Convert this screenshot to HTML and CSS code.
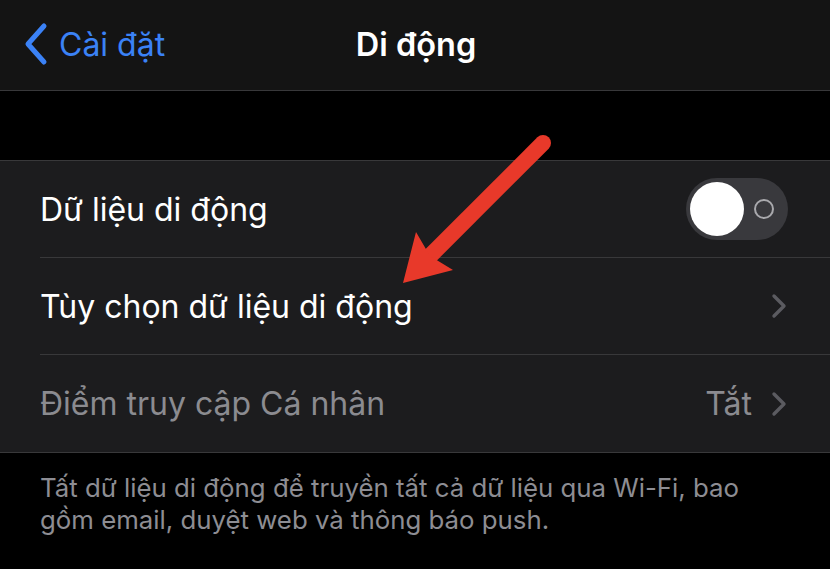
FILE: index.html
```html
<!DOCTYPE html>
<html lang="vi">
<head>
<meta charset="utf-8">
<title>Di động</title>
<link rel="stylesheet" href="styles.css">
</head>
<body>
<div class="screen">
  <header class="nav">
    <a class="back">
      <svg class="back-chev" width="26" height="44" viewBox="0 0 26 44"><path d="M21 4 L5 22 L21 40" fill="none" stroke="#3b82f6" stroke-width="5" stroke-linecap="round" stroke-linejoin="round"/></svg>
      <span class="back-label">Cài đặt</span>
    </a>
    <h1 class="title">Di động</h1>
    <span class="nav-right"></span>
  </header>
  <div class="gap"></div>
  <section class="group">
    <div class="row">
      <div class="row-inner">
        <span class="label">Dữ liệu di động</span>
        <span class="toggle"><span class="knob"></span><span class="ring"></span></span>
      </div>
    </div>
    <div class="row">
      <div class="row-inner">
        <span class="label">Tùy chọn dữ liệu di động</span>
        <svg class="chev" width="16" height="26" viewBox="0 0 16 26"><path d="M3 3 L13 13 L3 23" fill="none" stroke="#5b5b60" stroke-width="3.4" stroke-linecap="round" stroke-linejoin="round"/></svg>
      </div>
    </div>
    <div class="row">
      <div class="row-inner last">
        <span class="label dim">Điểm truy cập Cá nhân</span>
        <span class="value">Tắt</span>
        <svg class="chev" width="16" height="26" viewBox="0 0 16 26"><path d="M3 3 L13 13 L3 23" fill="none" stroke="#5b5b60" stroke-width="3.4" stroke-linecap="round" stroke-linejoin="round"/></svg>
      </div>
    </div>
  </section>
  <p class="footer">Tất dữ liệu di động để truyền tất cả dữ liệu qua Wi-Fi, bao gồm email, duyệt web và thông báo push.</p>
  <svg class="arrow" width="830" height="569" viewBox="0 0 830 569">
    <line x1="543" y1="143" x2="428" y2="258" stroke="#e8392a" stroke-width="16" stroke-linecap="round"/>
    <polygon points="403,283 416,232 430,256 453,270" fill="#e8392a"/>
  </svg>
</div>
</body>
</html>
```

FILE: styles.css
```css
* { box-sizing: border-box; }
html, body {
  margin: 0;
  padding: 0;
  background: #000;
}
body {
  font-family: Inter, "Noto Sans", "DejaVu Sans", sans-serif;
  color: #fff;
}
.screen {
  position: relative;
  width: 830px;
  height: 569px;
  overflow: hidden;
  background: #000;
}
.nav {
  height: 91px;
  background: #141414;
  border-bottom: 1px solid #38383a;
  display: grid;
  grid-template-columns: 1fr auto 1fr;
  align-items: center;
}
.back {
  display: flex;
  align-items: center;
  gap: 10px;
  padding-left: 23px;
  color: #3b82f6;
  font-size: 32px;
}
.back-chev { display: block; margin-top: -2px; }
.back-label { line-height: 1; }
.title {
  margin: 0;
  font-size: 32.5px;
  font-weight: 600;
  line-height: 1;
  padding-left: 2px;
}
.gap { height: 69px; }
.group {
  background: #1c1c1e;
  border-top: 1px solid #38383a;
  border-bottom: 1px solid #38383a;
}
.row { padding-left: 40px; }
.row-inner {
  height: 97px;
  display: flex;
  align-items: center;
  padding-right: 42px;
  border-bottom: 1px solid #38383a;
}
.row-inner.last { border-bottom: none; }
.label {
  flex: 1;
  font-size: 32px;
  color: #fff;
}
.label.dim { color: #8b8b90; }
.value {
  font-size: 32px;
  color: #8b8b90;
  margin-right: 19px;
}
.chev { display: block; margin-right: 1px; }
.toggle {
  position: relative;
  width: 102px;
  height: 62px;
  border-radius: 31px;
  background: #39393d;
}
.knob {
  position: absolute;
  left: 4px;
  top: 4px;
  width: 54px;
  height: 54px;
  border-radius: 50%;
  background: #fff;
}
.ring {
  position: absolute;
  left: 68px;
  top: 21px;
  width: 20px;
  height: 20px;
  border-radius: 50%;
  border: 2px solid #a9a9ad;
}
.footer {
  margin: 0;
  padding: 19px 60px 0 40px;
  font-size: 25.8px;
  line-height: 32px;
  color: #8d8d93;
}
.arrow {
  position: absolute;
  left: 0;
  top: 0;
  pointer-events: none;
}
```
